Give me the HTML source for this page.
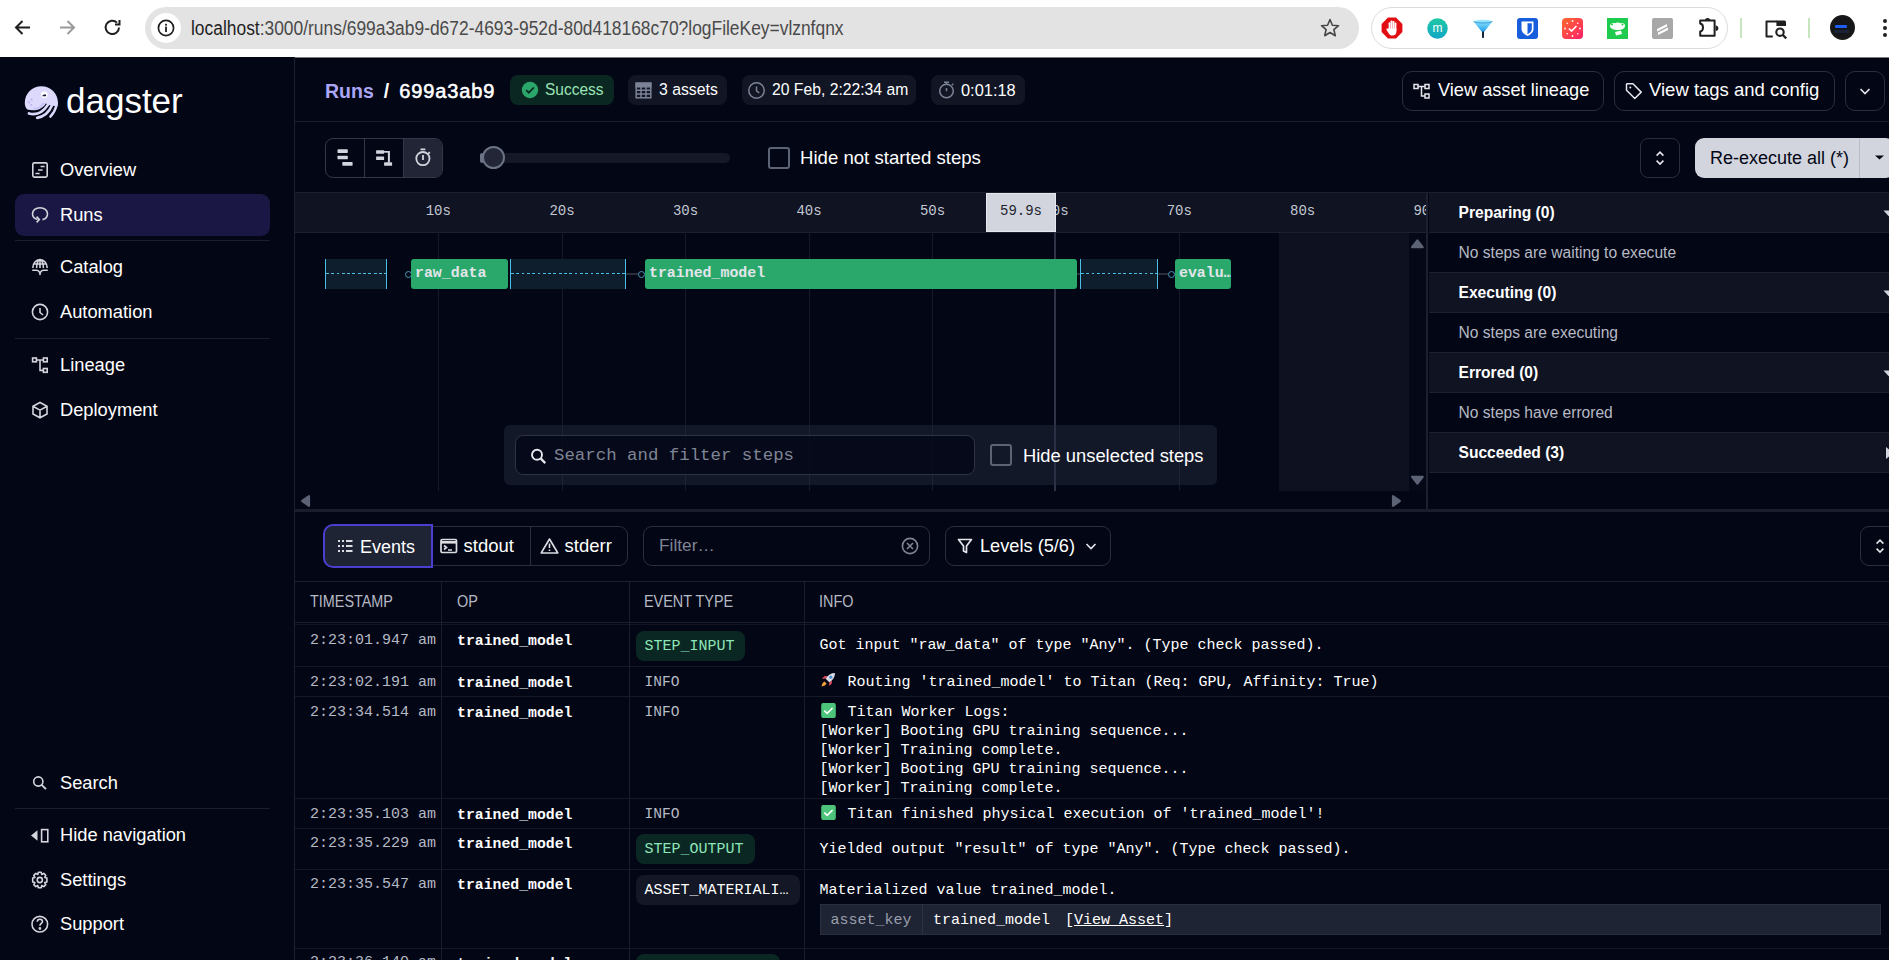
<!DOCTYPE html>
<html><head><meta charset="utf-8">
<style>
*{box-sizing:border-box;margin:0;padding:0}
html,body{width:1889px;height:960px;overflow:hidden;background:#030615;font-family:"Liberation Sans",sans-serif;color:#fff}
.a{position:absolute}
.mono{font-family:"Liberation Mono",monospace}
#chrome{position:absolute;left:0;top:0;width:1889px;height:57px;background:#fff}
#side{position:absolute;left:0;top:57px;width:295px;height:903px;background:#030615;border-right:1px solid #1c1f2e}
.nav{position:absolute;left:15px;width:255px;height:42px;border-radius:10px}
.nav span{position:absolute;left:45px;top:11px;font-size:18px;color:#fff;white-space:nowrap}
.nav svg{position:absolute;left:16px;top:12px}
.sep{position:absolute;left:15px;width:255px;height:1px;background:#1c1f2e}
.tag{position:absolute;top:75px;height:30px;border-radius:8px;background:#131726;font-size:15px;white-space:nowrap}
.btn{position:absolute;border:1px solid #2a2e3d;border-radius:10px;white-space:nowrap}
</style></head><body>
<!-- ============ BROWSER CHROME ============ -->
<div id="chrome">
  <svg class="a" style="left:0;top:0" width="140" height="57" viewBox="0 0 140 57">
    <g fill="none" stroke="#1f1f1f" stroke-width="2">
      <path d="M30 27.5H16M22.5 21L16 27.5L22.5 34"/>
    </g>
    <g fill="none" stroke="#9a9a9a" stroke-width="2">
      <path d="M60 27.5H74M67.5 21L74 27.5L67.5 34"/>
    </g>
    <g fill="none" stroke="#1f1f1f" stroke-width="2">
      <path d="M119 27.5A6.7 6.7 0 1 1 117 22.6"/>
      <path d="M119.5 20V24.5H115"/>
    </g>
  </svg>
  <div class="a" style="left:145px;top:7px;width:1214px;height:42px;border-radius:21px;background:#e3e3e3"></div>
  <div class="a" style="left:151px;top:13px;width:30px;height:30px;border-radius:15px;background:#fff"></div>
  <svg class="a" style="left:156px;top:18px" width="20" height="20" viewBox="0 0 20 20">
    <circle cx="10" cy="10" r="7.6" fill="none" stroke="#1f1f1f" stroke-width="1.7"/>
    <rect x="9.1" y="8.6" width="1.8" height="5.4" fill="#1f1f1f"/>
    <rect x="9.1" y="5.8" width="1.8" height="1.8" fill="#1f1f1f"/>
  </svg>
  <div class="a" style="left:191px;top:17px;font-size:20px;line-height:22px;color:#4a4a4a;white-space:nowrap;letter-spacing:0;transform:scaleX(0.87);transform-origin:0 0"><span style="color:#1f1f1f">localhost</span>:3000/runs/699a3ab9-d672-4693-952d-80d418168c70?logFileKey=vlznfqnx</div>
  <svg class="a" style="left:1319px;top:17px" width="22" height="22" viewBox="0 0 22 22">
    <path d="M11 2.5L13.4 8.2L19.5 8.7L14.9 12.7L16.3 18.7L11 15.5L5.7 18.7L7.1 12.7L2.5 8.7L8.6 8.2Z" fill="none" stroke="#474747" stroke-width="1.6" stroke-linejoin="round"/>
  </svg>
  <div class="a" style="left:1371px;top:7px;width:357px;height:42px;border-radius:21px;border:1px solid #dcdcdc"></div>
  <svg class="a" style="left:1380px;top:16px" width="24" height="24" viewBox="0 0 24 24">
  <path d="M8 1.6H16L22.4 8V16L16 22.4H8L1.6 16V8Z" fill="#e20f12"/>
  <g fill="#fff">
    <rect x="8.6" y="6.2" width="1.9" height="9" rx="0.95"/>
    <rect x="10.6" y="4.4" width="1.9" height="10" rx="0.95"/>
    <rect x="12.6" y="4.9" width="1.9" height="10" rx="0.95"/>
    <rect x="14.6" y="6.6" width="1.8" height="8.5" rx="0.9"/>
    <path d="M8.6 12.5H16.4V15.5C16.4 18 15 19.6 12.5 19.6C10.5 19.6 9.6 18.6 8.6 17.2L6.4 13.6C6 12.8 6.9 12 7.6 12.6Z"/>
  </g>
</svg>
  <svg class="a" style="left:1427px;top:18px" width="21" height="21" viewBox="0 0 21 21">
    <defs><linearGradient id="mg" x1="0" y1="0" x2="0" y2="1"><stop offset="0" stop-color="#1ec9a4"/><stop offset="1" stop-color="#13a6c6"/></linearGradient></defs>
    <circle cx="10.5" cy="10.5" r="10.2" fill="url(#mg)"/>
    <text x="10.5" y="14.3" font-size="12" fill="#fff" text-anchor="middle" font-family="Liberation Sans">m</text>
  </svg>
  <svg class="a" style="left:1472px;top:17px" width="22" height="22" viewBox="0 0 22 22">
  <defs><linearGradient id="fg" x1="0" y1="0" x2="0" y2="1"><stop offset="0" stop-color="#a6ecff"/><stop offset="0.5" stop-color="#3db4f0"/><stop offset="1" stop-color="#0b58b8"/></linearGradient></defs>
  <path d="M1.6 4.5C2.5 2 19.5 2 20.4 4.5L12 15V20.5H10V15Z" fill="url(#fg)"/>
  <path d="M1.6 4.5C4 6.5 18 6.5 20.4 4.5" fill="none" stroke="#2a8fd6" stroke-width="0.8"/>
  <path d="M10 14.6H12V20.8H10Z" fill="#15223a"/>
</svg>
  <svg class="a" style="left:1517px;top:18px" width="21" height="21" viewBox="0 0 21 21">
    <rect x="0" y="0" width="21" height="21" rx="3" fill="#175ddc"/>
    <path d="M4.5 3.5H16.5V11C16.5 14.5 13 16.8 10.5 18C8 16.8 4.5 14.5 4.5 11Z" fill="#fff"/>
    <path d="M10.5 5.2H14.8V11C14.8 13.5 12.5 15.3 10.5 16.2Z" fill="#175ddc"/>
  </svg>
  <svg class="a" style="left:1562px;top:18px" width="21" height="21" viewBox="0 0 21 21">
    <defs><linearGradient id="cg" x1="0" y1="0" x2="1" y2="1"><stop offset="0" stop-color="#ff6a2a"/><stop offset="1" stop-color="#ff1f6a"/></linearGradient></defs>
    <rect x="0" y="0" width="21" height="21" rx="4" fill="url(#cg)"/>
    <path d="M7 10.5L9.5 13L14.5 8" fill="none" stroke="#fff" stroke-width="1.6"/>
    <g fill="#fff"><circle cx="10.5" cy="3" r="0.9"/><circle cx="10.5" cy="18" r="0.9"/><circle cx="3" cy="10.5" r="0.9"/><circle cx="18" cy="10.5" r="0.9"/><circle cx="5.2" cy="5.2" r="0.8"/><circle cx="15.8" cy="5.2" r="0.8"/><circle cx="5.2" cy="15.8" r="0.8"/><circle cx="15.8" cy="15.8" r="0.8"/></g>
  </svg>
  <svg class="a" style="left:1607px;top:18px" width="21" height="21" viewBox="0 0 21 21">
    <rect x="0" y="0" width="21" height="21" fill="#1ecb4f"/>
    <path d="M3 8C3 5.5 5.5 4.5 8 5.2C9.5 4.2 12 4.2 13.5 5.2C16 4.5 18.5 5.5 18 8.5C17.5 11 14 12 10.5 12C7 12 3 10.5 3 8Z" fill="#fff"/>
    <path d="M8 14L14 12.5L15 16L9 17.5Z" fill="#fff"/>
    <circle cx="5" cy="6.5" r="1" fill="#1ecb4f"/><circle cx="15.5" cy="6.5" r="1" fill="#1ecb4f"/>
  </svg>
  <svg class="a" style="left:1652px;top:18px" width="21" height="21" viewBox="0 0 21 21">
    <rect x="0" y="0" width="21" height="21" rx="2" fill="#a8a8a8"/>
    <path d="M5 11L15 6V8.5L5 13.5Z M6 14.5L16 9.5V12L6 17Z" fill="#fff"/>
  </svg>
  <svg class="a" style="left:1694px;top:14px" width="28" height="28" viewBox="1694 14 28 28">
  <path d="M1700.2 20.6H1714.6V35.8H1700.2V31.4C1702.2 31 1703 30 1703 27.4C1703 24.8 1702.2 23.8 1700.2 23.4Z" fill="none" stroke="#1f1f1f" stroke-width="2" stroke-linejoin="round"/>
  <path d="M1704.9 20.6A2.7 2.7 0 0 1 1710.3 20.6Z" fill="#1f1f1f"/>
  <path d="M1715.6 25.6A2.7 2.7 0 0 1 1715.6 31Z" fill="#1f1f1f"/>
</svg>
  <div class="a" style="left:1740px;top:18px;width:2px;height:20px;background:#c6e5bf"></div>
  <svg class="a" style="left:1760px;top:14px" width="30" height="28" viewBox="1760 14 30 28">
  <path d="M1772.8 36.5H1766.5V21.5H1777" fill="none" stroke="#1f1f1f" stroke-width="2" stroke-linejoin="round"/>
  <path d="M1776.4 20.4H1784.5A1.5 1.5 0 0 1 1786 21.9V26H1776.4Z" fill="#1f1f1f"/>
  <circle cx="1780" cy="32.2" r="3.7" fill="none" stroke="#1f1f1f" stroke-width="2.1"/>
  <path d="M1782.8 35L1786.3 38.4" stroke="#1f1f1f" stroke-width="2.2"/>
</svg>
  <div class="a" style="left:1808px;top:18px;width:2px;height:20px;background:#c6e5bf"></div>
  <div class="a" style="left:1830px;top:15px;width:25px;height:25px;border-radius:50%;background:radial-gradient(circle at 50% 45%,#10131c 0,#171717 60%,#2a2a26 100%);overflow:hidden"><div class="a" style="left:4.5px;top:9.5px;width:12px;height:3.5px;background:#1f5ef5;border-radius:1px"></div><div class="a" style="left:4px;top:15px;width:15px;height:3px;background:#1a2235"></div></div>
  <svg class="a" style="left:1880px;top:17px" width="9" height="22" viewBox="0 0 9 22">
    <circle cx="5" cy="4" r="2" fill="#1f1f1f"/><circle cx="5" cy="11" r="2" fill="#1f1f1f"/><circle cx="5" cy="18" r="2" fill="#1f1f1f"/>
  </svg>
</div>
<div class="a" style="left:0;top:57px;width:1889px;height:1px;background:#7a7b80"></div><div class="a" style="left:0;top:58px;width:1889px;height:1px;background:#01020c"></div>

<!-- ============ SIDEBAR ============ -->
<div id="side">
</div>
<svg class="a" style="left:20px;top:82px" width="42" height="42" viewBox="0 0 42 42">
  <path d="M7.2 27.6C5.5 25.5 4.8 23.5 4.8 20.8C4.8 11.6 12.2 4.2 21.4 4.2C30.6 4.2 38 11.6 38 20.8C38 21.8 37.9 22.6 37.7 23.4L34.6 24L29.8 23.2L25.7 21.5C23 26.5 17 29.8 7.2 27.6Z" fill="#dcd9fc"/>
  <g fill="none" stroke="#dcd9fc" stroke-linecap="round">
    <path d="M8.9 31.4Q20 34.8 27.9 22.8" stroke-width="2.6"/>
    <path d="M17.2 35.8Q27.5 34 31.9 23.5" stroke-width="2.7"/>
    <path d="M30.4 34.6Q34.8 30 36.5 23.5" stroke-width="2.5"/>
  </g>
  <path d="M13 26.8Q20 27.5 24 20.5" fill="none" stroke="#c9c4f8" stroke-width="2"/>
  <circle cx="24.3" cy="12.7" r="3.3" fill="#fff"/>
  <path d="M22.4 14.2C22.5 13 23.3 12.6 24 12.8C24.5 11.9 25.8 12 26.1 13.1C26.2 13.6 26.1 14 25.9 14.2Z" fill="#1b1446"/>
  <g fill="#bcb6f2"><circle cx="11.6" cy="17.7" r="1.1"/><circle cx="9" cy="20.3" r="1.1"/><circle cx="11.4" cy="23" r="1.1"/></g>
</svg>
<div class="a" style="left:66px;top:80.5px;font-size:35px;line-height:40px;color:#fff;white-space:nowrap">dagster</div>
<div class="a" style="left:15px;top:194px;width:255px;height:42px;border-radius:9px;background:#1b1744"></div>
<div class="sep" style="top:240px"></div>
<div class="sep" style="top:338px"></div>
<div class="sep" style="top:808px"></div>
<div class="a" style="left:60px;top:160px;font-size:18.3px;line-height:20px;color:#fff">Overview</div>
<div class="a" style="left:60px;top:205px;font-size:18.3px;line-height:20px;color:#fff">Runs</div>
<div class="a" style="left:60px;top:257px;font-size:18.3px;line-height:20px;color:#fff">Catalog</div>
<div class="a" style="left:60px;top:302px;font-size:18.3px;line-height:20px;color:#fff">Automation</div>
<div class="a" style="left:60px;top:355px;font-size:18.3px;line-height:20px;color:#fff">Lineage</div>
<div class="a" style="left:60px;top:400px;font-size:18.3px;line-height:20px;color:#fff">Deployment</div>
<div class="a" style="left:60px;top:773px;font-size:18.3px;line-height:20px;color:#fff">Search</div>
<div class="a" style="left:60px;top:825px;font-size:18.3px;line-height:20px;color:#fff;white-space:nowrap">Hide navigation</div>
<div class="a" style="left:60px;top:870px;font-size:18.3px;line-height:20px;color:#fff">Settings</div>
<div class="a" style="left:60px;top:914px;font-size:18.3px;line-height:20px;color:#fff">Support</div>
<svg class="a" style="left:0;top:140px" width="60" height="300" viewBox="0 140 60 300" fill="none" stroke="#d4d4dc" stroke-width="1.6">
  <!-- overview -->
  <rect x="32.8" y="162.9" width="14.4" height="14.2" rx="1.6"/>
  <path d="M40.6 166.5H44.6M38 170H42.6M35.5 173.5H39.6" />
  <!-- runs -->
  <path d="M37.5 219.6C34.5 218.8 32.5 216.6 32.5 213.8C32.5 210.3 35.8 207.8 40 207.8C44.2 207.8 47.5 210.3 47.5 213.8C47.5 216.8 45.5 219 42.5 219.6"/>
  <path d="M36.6 216.6L39.3 219.6L36.6 222.4"/>
  <!-- catalog -->
  <path d="M32.8 268C32.8 263 36 259.6 40 259.6C44 259.6 47.2 263 47.2 268M36.6 268C36.6 263 38.2 259.6 40 259.6C41.8 259.6 43.4 263 43.4 268M40 259.6V268M33.4 264H46.6"/>
  <path d="M32.2 270.3H36.5C38 270.3 39.3 271.3 40 273.3C40.7 271.3 42 270.3 43.5 270.3H47.8M40 273.3V275"/>
  <!-- automation -->
  <circle cx="40" cy="312" r="7.6"/>
  <path d="M40 308V312.5L43 315"/>
  <!-- lineage -->
  <rect x="32.6" y="358" width="3.8" height="3.8"/>
  <rect x="43.4" y="358" width="3.8" height="3.8"/>
  <rect x="43.4" y="368.5" width="3.8" height="3.8"/>
  <path d="M36.4 360H43.4 M40 360V370.4H43.4"/>
  <!-- deployment -->
  <path d="M40 402.5L47 406.3V414L40 417.8L33 414V406.3Z M33 406.3L40 410.1L47 406.3 M40 410.1V417.8"/>
</svg>
<svg class="a" style="left:0;top:760px" width="60" height="190" viewBox="0 760 60 190" fill="none" stroke="#d4d4dc" stroke-width="1.6">
  <circle cx="38.3" cy="781.5" r="4.6"/>
  <path d="M41.6 784.8L46 789.2" stroke-width="1.9"/>
  <path d="M31 835.5L37.5 830.2V840.8Z" fill="#d4d4dc" stroke="none"/>
  <rect x="41.6" y="829.6" width="6.2" height="12.2"/>
  <circle cx="39.8" cy="880" r="2.6"/>
  <path d="M38.4 872.3H41.2L41.8 874.5L43.8 873.4L45.8 875.4L44.7 877.4L46.9 878V882L44.7 882.6L45.8 884.6L43.8 886.6L41.8 885.5L41.2 887.7H38.4L37.8 885.5L35.8 886.6L33.8 884.6L34.9 882.6L32.7 882V878L34.9 877.4L33.8 875.4L35.8 873.4L37.8 874.5Z" stroke-linejoin="round"/>
  <circle cx="39.8" cy="924.2" r="7.8"/>
  <path d="M37.3 921.8C37.3 920.2 38.4 919.2 39.9 919.2C41.4 919.2 42.5 920.2 42.5 921.6C42.5 923.4 39.9 923.6 39.9 925.8"/>
  <circle cx="39.9" cy="928.5" r="0.6" fill="#d4d4dc"/>
</svg>

<!-- ============ HEADER ============ -->
<div class="a" style="left:295px;top:121px;width:1594px;height:1px;background:#1c1f2e"></div>
<div class="a" style="left:325px;top:80px;font-size:19.5px;line-height:22px;font-weight:bold;white-space:nowrap"><span style="color:#aca6f6">Runs</span><span style="color:#fff;margin-left:10px">/</span><span style="color:#fff;margin-left:10px;letter-spacing:0.9px;font-weight:normal;font-size:20px;-webkit-text-stroke:0.55px #fff">699a3ab9</span></div>
<div class="a" style="left:510px;top:75px;width:104px;height:30px;border-radius:8px;background:#0a2722"></div>
<svg class="a" style="left:521px;top:81px" width="18" height="18" viewBox="0 0 18 18"><circle cx="9" cy="9" r="8.2" fill="#2aa66b"/><path d="M5.2 9.2L7.8 11.7L12.8 6.5" fill="none" stroke="#0a2722" stroke-width="1.8"/></svg>
<div class="a" style="left:545px;top:80px;font-size:16.3px;line-height:18px;color:#9be4b4;white-space:nowrap;transform:scaleX(0.95);transform-origin:0 0">Success</div>
<div class="a" style="left:628px;top:75px;width:99px;height:30px;border-radius:8px;background:#121624"></div>
<svg class="a" style="left:634px;top:81px" width="19" height="19" viewBox="0 0 19 19" fill="none" stroke="#7c8396" stroke-width="1.5"><rect x="2.2" y="2.2" width="14.6" height="14.6"/><rect x="2.2" y="2.2" width="14.6" height="3.6" fill="#7c8396"/><path d="M2.2 9.3H16.8M2.2 13H16.8M7 5.8V16.8M12 5.8V16.8"/></svg>
<div class="a" style="left:659px;top:80px;font-size:16.3px;line-height:18px;color:#fff;white-space:nowrap;transform:scaleX(0.97);transform-origin:0 0">3 assets</div>
<div class="a" style="left:742px;top:75px;width:174px;height:30px;border-radius:8px;background:#121624"></div>
<svg class="a" style="left:747px;top:81px" width="19" height="19" viewBox="0 0 19 19" fill="none" stroke="#7c8396" stroke-width="1.5"><circle cx="9.5" cy="9.5" r="7.7"/><path d="M9.5 5.5V9.8L12.3 12"/></svg>
<div class="a" style="left:772px;top:80px;font-size:16.3px;line-height:18px;color:#fff;white-space:nowrap;transform:scaleX(0.965);transform-origin:0 0">20 Feb, 2:22:34 am</div>
<div class="a" style="left:931px;top:75px;width:94px;height:30px;border-radius:8px;background:#121624"></div>
<svg class="a" style="left:937px;top:80px" width="19" height="20" viewBox="0 0 19 20" fill="none" stroke="#7c8396" stroke-width="1.5"><circle cx="9.5" cy="11" r="6.8"/><path d="M7 2.2H12M9.5 2.2V4.2M9.5 8V11.3M15 5L16.3 3.7"/></svg>
<div class="a" style="left:961px;top:81px;font-size:16.4px;line-height:18px;color:#fff;white-space:nowrap">0:01:18</div>

<div class="btn" style="left:1402px;top:71px;width:202px;height:40px"></div>
<svg class="a" style="left:1413px;top:82px" width="18" height="18" viewBox="0 0 18 18" fill="none" stroke="#e6e6ec" stroke-width="1.5"><rect x="1" y="2.5" width="4" height="4"/><rect x="12" y="2.5" width="4" height="4"/><rect x="12" y="12" width="4" height="4"/><path d="M5 4.5H12M8.5 4.5V14H12"/></svg>
<div class="a" style="left:1438px;top:80.3px;font-size:18.2px;line-height:20px;color:#fff;white-space:nowrap">View asset lineage</div>
<div class="btn" style="left:1614px;top:71px;width:221px;height:40px"></div>
<svg class="a" style="left:1624px;top:81px" width="20" height="20" viewBox="0 0 20 20" fill="none" stroke="#e6e6ec" stroke-width="1.5" stroke-linejoin="round"><path d="M2.5 3.2V9.2L10.8 17.5L17.2 11.1L8.9 2.8H2.9Z"/><circle cx="6.3" cy="6.6" r="1" fill="#e6e6ec" stroke="none"/></svg>
<div class="a" style="left:1649px;top:80.1px;font-size:18.5px;line-height:20px;color:#fff;white-space:nowrap">View tags and config</div>
<div class="btn" style="left:1845px;top:71px;width:40px;height:40px"></div>
<svg class="a" style="left:1857px;top:84px" width="16" height="14" viewBox="0 0 16 14" fill="none" stroke="#e6e6ec" stroke-width="1.6"><path d="M3.5 5L8 9.5L12.5 5"/></svg>

<!-- ============ TOOLBAR ============ -->
<div class="a" style="left:295px;top:192px;width:1594px;height:1px;background:#1c1f2e"></div>
<div class="btn" style="left:325px;top:138px;width:118px;height:40px;border-radius:8px;overflow:hidden;border-color:#333849">
  <div class="a" style="left:77px;top:0;width:40px;height:38px;background:#212536"></div>
  <div class="a" style="left:38px;top:0;width:1px;height:38px;background:#333849"></div>
  <div class="a" style="left:77px;top:0;width:1px;height:38px;background:#333849"></div>
</div>
<svg class="a" style="left:330px;top:140px" width="110" height="36" viewBox="330 140 110 36" fill="#d2d5dd">
  <rect x="337.5" y="149.3" width="10.3" height="3.6" rx="0.6"/><rect x="337.5" y="155.7" width="10.3" height="3.6" rx="0.6"/><rect x="342.3" y="162.1" width="10.3" height="3.6" rx="0.6"/>
  <rect x="376.1" y="150.2" width="8" height="3.6" rx="0.6"/><rect x="376.1" y="156.4" width="8" height="3.6" rx="0.6"/><rect x="384.1" y="162.2" width="8" height="3.6" rx="0.6"/>
  <rect x="387.9" y="151" width="2" height="11.5"/><rect x="384" y="151" width="5" height="1.7"/>
  <g fill="none" stroke="#d2d5dd" stroke-width="1.8"><circle cx="422.9" cy="158.6" r="6.6"/><path d="M420.5 149.3H425.3M423 155V160M428.2 153.8L429.8 152.2"/></g>
</svg>
<div class="a" style="left:480px;top:153px;width:250px;height:9.5px;border-radius:5px;background:#151927"></div>
<div class="a" style="left:480px;top:153px;width:4px;height:9.5px;border-radius:2px;background:#6b7385"></div><div class="a" style="left:482px;top:146px;width:23px;height:23px;border-radius:50%;background:#222637;border:2.3px solid #6b7385"></div>
<div class="a" style="left:768px;top:146.5px;width:22px;height:22px;border-radius:3px;border:2.3px solid #5c6375"></div>
<div class="a" style="left:800px;top:148px;font-size:18.6px;line-height:20px;color:#fff;white-space:nowrap">Hide not started steps</div>
<div class="btn" style="left:1640px;top:138px;width:40px;height:40px;border-radius:8px"></div>
<svg class="a" style="left:1651px;top:147px" width="18" height="22" viewBox="0 0 18 22" fill="none" stroke="#e6e6ec" stroke-width="1.6"><path d="M5.6 8.6L9 5.2L12.4 8.6M5.6 13.6L9 17L12.4 13.6"/></svg>
<div class="a" style="left:1695px;top:138px;width:200px;height:40px;border-radius:9px;background:#d2d5dd"></div>
<div class="a" style="left:1859px;top:138px;width:1px;height:40px;background:#b8bcc6"></div>
<div class="a" style="left:1710px;top:147.5px;font-size:18px;line-height:20px;color:#030615;white-space:nowrap">Re-execute all (*)</div>
<svg class="a" style="left:1873px;top:152px" width="14" height="10" viewBox="0 0 14 10"><path d="M2 3.5H11L6.5 7.5Z" fill="#030615"/></svg>

<!-- ============ GANTT ============ -->
<div class="a" style="left:295px;top:193px;width:1132px;height:39px;background:#0f1322;overflow:hidden"><div class="a mono" style="left:103.3px;width:80px;text-align:center;top:10px;font-size:14px;line-height:16px;color:#c4c8d2">10s</div><div class="a mono" style="left:227.0px;width:80px;text-align:center;top:10px;font-size:14px;line-height:16px;color:#c4c8d2">20s</div><div class="a mono" style="left:350.5px;width:80px;text-align:center;top:10px;font-size:14px;line-height:16px;color:#c4c8d2">30s</div><div class="a mono" style="left:474.0px;width:80px;text-align:center;top:10px;font-size:14px;line-height:16px;color:#c4c8d2">40s</div><div class="a mono" style="left:597.5px;width:80px;text-align:center;top:10px;font-size:14px;line-height:16px;color:#c4c8d2">50s</div><div class="a mono" style="left:721.0px;width:80px;text-align:center;top:10px;font-size:14px;line-height:16px;color:#c4c8d2">60s</div><div class="a mono" style="left:844.3px;width:80px;text-align:center;top:10px;font-size:14px;line-height:16px;color:#c4c8d2">70s</div><div class="a mono" style="left:967.6px;width:80px;text-align:center;top:10px;font-size:14px;line-height:16px;color:#c4c8d2">80s</div><div class="a mono" style="left:1091.0px;width:80px;text-align:center;top:10px;font-size:14px;line-height:16px;color:#c4c8d2">90s</div></div>
<div class="a" style="left:295px;top:232px;width:1132px;height:1px;background:#1c2030"></div>
<div class="a" style="left:438px;top:232px;width:1px;height:259px;background:#161a28"></div><div class="a" style="left:562px;top:232px;width:1px;height:259px;background:#161a28"></div><div class="a" style="left:685px;top:232px;width:1px;height:259px;background:#161a28"></div><div class="a" style="left:809px;top:232px;width:1px;height:259px;background:#161a28"></div><div class="a" style="left:932px;top:232px;width:1px;height:259px;background:#161a28"></div><div class="a" style="left:1179px;top:232px;width:1px;height:259px;background:#161a28"></div><div class="a" style="left:1303px;top:232px;width:1px;height:259px;background:#161a28"></div>
<div class="a" style="left:1279px;top:233px;width:130px;height:258px;background:#0d1120"></div>
<div class="a" style="left:1409px;top:233px;width:18px;height:258px;background:#050817"></div>
<svg class="a" style="left:1410px;top:238px" width="15" height="12" viewBox="0 0 15 12"><path d="M7.4 2.4L12.7 9.2H2.1Z" fill="#5c6375" stroke="#5c6375" stroke-linejoin="round" stroke-width="2.2"/></svg>
<svg class="a" style="left:1410px;top:474px" width="15" height="12" viewBox="0 0 15 12"><path d="M7.4 9.6L12.7 2.8H2.1Z" fill="#5c6375" stroke="#5c6375" stroke-linejoin="round" stroke-width="2.2"/></svg>
<svg class="a" style="left:299px;top:493px" width="13" height="16" viewBox="0 0 13 16"><path d="M3.2 8L10 3.2V12.8Z" fill="#5c6375" stroke="#5c6375" stroke-linejoin="round" stroke-width="2.2"/></svg>
<svg class="a" style="left:1390px;top:493px" width="13" height="16" viewBox="0 0 13 16"><path d="M9.8 8L3 3.2V12.8Z" fill="#5c6375" stroke="#5c6375" stroke-linejoin="round" stroke-width="2.2"/></svg>
<div class="a" style="left:1054px;top:232px;width:2px;height:259px;background:#2e3345"></div>
<div class="a" style="left:986px;top:193px;width:70px;height:39px;background:#d2d5dd;border:1px solid #e6e8ee"></div>
<div class="a mono" style="left:986px;width:70px;text-align:center;top:203px;font-size:14px;line-height:16px;color:#1b1f2e">59.9s</div>
<div class="a" style="left:325px;top:259px;width:62px;height:30px;background:#0e1e2c;border-left:1.3px solid #4cbde4;border-right:1.3px solid #4cbde4"><div class="a" style="left:0;right:0;top:14px;height:1.2px;background:repeating-linear-gradient(90deg,#4cbde4 0 2.8px,transparent 2.8px 5.3px)"></div></div><div class="a" style="left:405.29999999999995px;top:270.8px;width:7.2px;height:7.2px;border-radius:50%;border:1.1px solid #4b97b8"></div><div class="a" style="left:411px;top:259px;width:97px;height:30px;border-radius:3px;background:#2aa86b;overflow:hidden"><div class="a mono" style="left:4px;top:6px;font-size:14.9px;line-height:17px;font-weight:bold;color:#e2e5ea;white-space:nowrap">raw_data</div></div>
<div class="a" style="left:510px;top:259px;width:116px;height:30px;background:#0e1e2c;border-left:1.3px solid #4cbde4;border-right:1.3px solid #4cbde4"><div class="a" style="left:0;right:0;top:14px;height:1.2px;background:repeating-linear-gradient(90deg,#4cbde4 0 2.8px,transparent 2.8px 5.3px)"></div></div><div class="a" style="left:626px;top:273px;width:12px;height:2px;background:#2a2e3b"></div><div class="a" style="left:637.6999999999999px;top:270.8px;width:7.2px;height:7.2px;border-radius:50%;border:1.1px solid #4b97b8"></div><div class="a" style="left:645px;top:259px;width:432px;height:30px;border-radius:3px;background:#2aa86b;overflow:hidden"><div class="a mono" style="left:4px;top:6px;font-size:14.9px;line-height:17px;font-weight:bold;color:#e2e5ea;white-space:nowrap">trained_model</div></div>
<div class="a" style="left:1077px;top:273px;width:3px;height:2px;background:#2a2e3b"></div><div class="a" style="left:1080px;top:259px;width:78px;height:30px;background:#0e1e2c;border-left:1.3px solid #4cbde4;border-right:1.3px solid #4cbde4"><div class="a" style="left:0;right:0;top:14px;height:1.2px;background:repeating-linear-gradient(90deg,#4cbde4 0 2.8px,transparent 2.8px 5.3px)"></div></div><div class="a" style="left:1158px;top:273px;width:10px;height:2px;background:#2a2e3b"></div><div class="a" style="left:1167.7px;top:270.8px;width:7.2px;height:7.2px;border-radius:50%;border:1.1px solid #4b97b8"></div><div class="a" style="left:1175px;top:259px;width:56px;height:30px;border-radius:3px;background:#2aa86b;overflow:hidden"><div class="a mono" style="left:4px;top:6px;font-size:14.9px;line-height:17px;font-weight:bold;color:#e2e5ea;white-space:nowrap">evalu…</div></div>
<div class="a" style="left:1426px;top:193px;width:2px;height:317px;background:#1c2030"></div>
<div class="a" style="left:295px;top:509px;width:1594px;height:3px;background:#1a1e2c"></div>

<!-- search float -->
<div class="a" style="left:504px;top:425px;width:713px;height:60px;border-radius:6px;background:rgba(40,46,66,0.45)"></div>
<div class="a" style="left:515px;top:435px;width:460px;height:40px;border-radius:8px;background:rgba(3,6,21,0.8);border:1px solid #2e3344"></div>
<svg class="a" style="left:529px;top:447px" width="19" height="19" viewBox="0 0 19 19" fill="none" stroke="#e6e6ec" stroke-width="1.9"><circle cx="8" cy="7.8" r="5"/><path d="M11.6 11.4L16.3 16.1" stroke-width="2.2"/></svg>
<div class="a mono" style="left:554px;top:446.3px;font-size:17.4px;line-height:20px;color:#7f8595;white-space:nowrap">Search and filter steps</div>
<div class="a" style="left:990px;top:444px;width:22px;height:22px;border-radius:3px;border:2.3px solid #5c6375"></div>
<div class="a" style="left:1023px;top:445.6px;font-size:18.35px;line-height:20px;color:#fff;white-space:nowrap">Hide unselected steps</div>

<!-- step panel -->
<div class="a" style="left:1428px;top:193px;width:461px;height:316px;background:#030615"></div>
<div class="a" style="left:1429px;top:193px;width:460px;height:40px;background:#0f1322;border-bottom:1px solid #1c2030"><div class="a" style="left:29.5px;top:11px;font-size:15.6px;line-height:18px;font-weight:bold;color:#fff;white-space:nowrap">Preparing (0)</div></div><div class="a" style="left:1429px;top:233px;width:460px;height:40px;background:#030615;border-bottom:1px solid #1c2030"><div class="a" style="left:29.5px;top:10.5px;font-size:15.6px;line-height:18px;color:#b6bac4;white-space:nowrap">No steps are waiting to execute</div></div><div class="a" style="left:1429px;top:273px;width:460px;height:40px;background:#0f1322;border-bottom:1px solid #1c2030"><div class="a" style="left:29.5px;top:11px;font-size:15.6px;line-height:18px;font-weight:bold;color:#fff;white-space:nowrap">Executing (0)</div></div><div class="a" style="left:1429px;top:313px;width:460px;height:40px;background:#030615;border-bottom:1px solid #1c2030"><div class="a" style="left:29.5px;top:10.5px;font-size:15.6px;line-height:18px;color:#b6bac4;white-space:nowrap">No steps are executing</div></div><div class="a" style="left:1429px;top:353px;width:460px;height:40px;background:#0f1322;border-bottom:1px solid #1c2030"><div class="a" style="left:29.5px;top:11px;font-size:15.6px;line-height:18px;font-weight:bold;color:#fff;white-space:nowrap">Errored (0)</div></div><div class="a" style="left:1429px;top:393px;width:460px;height:40px;background:#030615;border-bottom:1px solid #1c2030"><div class="a" style="left:29.5px;top:10.5px;font-size:15.6px;line-height:18px;color:#b6bac4;white-space:nowrap">No steps have errored</div></div><div class="a" style="left:1429px;top:433px;width:460px;height:40px;background:#0f1322;border-bottom:1px solid #1c2030"><div class="a" style="left:29.5px;top:11px;font-size:15.6px;line-height:18px;font-weight:bold;color:#fff;white-space:nowrap">Succeeded (3)</div></div>
<!-- ============ LOGS TOOLBAR ============ -->
<div class="a" style="left:430px;top:526px;width:198px;height:40px;border:1px solid #2a2e3d;border-left:none;border-radius:0 9px 9px 0"></div>
<div class="a" style="left:530px;top:526px;width:1px;height:40px;background:#2a2e3d"></div>
<div class="a" style="left:322.5px;top:523.5px;width:110px;height:44.5px;border:2.5px solid #4b3fd0;border-radius:10px 0 0 10px;background:#1f2434"></div>
<svg class="a" style="left:336px;top:538px" width="18" height="16" viewBox="0 0 18 16" fill="#dcdde3"><rect x="2" y="2" width="2" height="2"/><rect x="2" y="7" width="2" height="2"/><rect x="2" y="12" width="2" height="2"/><rect x="6" y="2" width="2" height="2"/><rect x="6" y="7" width="2" height="2"/><rect x="6" y="12" width="2" height="2"/><rect x="10" y="2" width="6.5" height="2"/><rect x="10" y="7" width="6.5" height="2"/><rect x="10" y="12" width="6.5" height="2"/></svg>
<div class="a" style="left:360px;top:536.7px;font-size:18px;line-height:20px;color:#fff">Events</div>
<svg class="a" style="left:439px;top:537px" width="20" height="18" viewBox="0 0 20 18" fill="none" stroke="#dcdde3" stroke-width="1.7"><rect x="2" y="2.5" width="15.5" height="13" rx="1.3"/><path d="M2 5.3H17.5" stroke-width="2.6"/><path d="M5 8.5L7.5 10.5L5 12.5M9 13H13"/></svg>
<div class="a" style="left:463.5px;top:536.2px;font-size:18.5px;line-height:20px;color:#fff">stdout</div>
<svg class="a" style="left:540px;top:537px" width="20" height="18" viewBox="0 0 20 18" fill="none" stroke="#dcdde3" stroke-width="1.6" stroke-linejoin="round"><path d="M9.5 2L17.8 16H1.2Z"/><path d="M9.5 6.5V11M9.5 12.5V14"/></svg>
<div class="a" style="left:564.5px;top:536.2px;font-size:18.5px;line-height:20px;color:#fff">stderr</div>

<div class="a" style="left:643px;top:526px;width:287px;height:40px;border:1px solid #2a2e3d;border-radius:9px"></div>
<div class="a" style="left:659px;top:535.3px;font-size:17.3px;line-height:20px;color:#7f8595">Filter…</div>
<svg class="a" style="left:900px;top:536px" width="20" height="20" viewBox="0 0 20 20" fill="none" stroke="#7f8595" stroke-width="1.6"><circle cx="10" cy="10" r="7.6"/><path d="M7 7L13 13M13 7L7 13"/></svg>
<div class="a" style="left:945px;top:526px;width:166px;height:40px;border:1px solid #2a2e3d;border-radius:9px"></div>
<svg class="a" style="left:956px;top:537px" width="18" height="18" viewBox="0 0 18 18" fill="none" stroke="#e6e6ec" stroke-width="1.7" stroke-linejoin="round"><path d="M2.5 2.5H15.5L10.5 9V15.5L7.5 14V9Z"/></svg>
<div class="a" style="left:980px;top:536px;font-size:18.2px;line-height:20px;color:#fff;white-space:nowrap">Levels (5/6)</div>
<svg class="a" style="left:1083px;top:539px" width="16" height="14" viewBox="0 0 16 14" fill="none" stroke="#e6e6ec" stroke-width="1.6"><path d="M3.5 5L8 9.5L12.5 5"/></svg>
<div class="a" style="left:1860px;top:526px;width:40px;height:40px;border:1px solid #2a2e3d;border-radius:9px"></div>
<svg class="a" style="left:1871px;top:535px" width="18" height="22" viewBox="0 0 18 22" fill="none" stroke="#e6e6ec" stroke-width="1.6"><path d="M5.6 8.6L9 5.2L12.4 8.6M5.6 13.6L9 17L12.4 13.6"/></svg>

<!-- ============ TABLE ============ -->
<div class="a" style="left:295px;top:581px;width:1594px;height:1px;background:#1c2030"></div>
<div class="a" style="left:295px;top:622px;width:1594px;height:1px;background:#1a1e2c"></div><div class="a" style="left:295px;top:624px;width:1594px;height:1px;background:#121624"></div>
<div class="a" style="left:310px;top:593.2px;font-size:16px;line-height:17px;color:#b6bac4;white-space:nowrap;transform:scaleX(0.9);transform-origin:0 0">TIMESTAMP</div>
<div class="a" style="left:456.5px;top:593.2px;font-size:16px;line-height:17px;color:#b6bac4;white-space:nowrap;transform:scaleX(0.9);transform-origin:0 0">OP</div>
<div class="a" style="left:644px;top:593.2px;font-size:16px;line-height:17px;color:#b6bac4;white-space:nowrap;transform:scaleX(0.9);transform-origin:0 0">EVENT TYPE</div>
<div class="a" style="left:819px;top:593.2px;font-size:16px;line-height:17px;color:#b6bac4;white-space:nowrap;transform:scaleX(0.9);transform-origin:0 0">INFO</div>
<div class="a" style="left:441px;top:582px;width:1px;height:378px;background:#1a1e2c"></div>
<div class="a" style="left:629px;top:582px;width:1px;height:378px;background:#1a1e2c"></div>
<div class="a" style="left:804px;top:582px;width:1px;height:378px;background:#1a1e2c"></div>
<div class="a" style="left:295px;top:666px;width:1594px;height:1px;background:#161a28"></div><div class="a" style="left:295px;top:696px;width:1594px;height:1px;background:#161a28"></div><div class="a" style="left:295px;top:798px;width:1594px;height:1px;background:#161a28"></div><div class="a" style="left:295px;top:828px;width:1594px;height:1px;background:#161a28"></div><div class="a" style="left:295px;top:869px;width:1594px;height:1px;background:#161a28"></div><div class="a" style="left:295px;top:948px;width:1594px;height:1px;background:#161a28"></div><div class="a mono" style="left:310px;top:632.4px;font-size:15px;line-height:17px;color:#b6bac4;white-space:nowrap">2:23:01.947 am</div><div class="a mono" style="left:457px;top:633.3px;font-size:14.8px;line-height:17px;font-weight:bold;color:#fff;white-space:nowrap">trained_model</div><div class="a" style="left:635.5px;top:630.5px;width:109px;height:30px;border-radius:8px;background:#0b2724"></div><div class="a mono" style="left:644.5px;top:637.7px;font-size:15px;line-height:17px;color:#8ee6b8;white-space:nowrap">STEP_INPUT</div><div class="a mono" style="left:819.5px;top:637.4px;font-size:15px;line-height:17px;color:#fff;white-space:pre">Got input "raw_data" of type "Any". (Type check passed).</div><div class="a mono" style="left:310px;top:673.7px;font-size:15px;line-height:17px;color:#b6bac4;white-space:nowrap">2:23:02.191 am</div><div class="a mono" style="left:457px;top:674.7px;font-size:14.8px;line-height:17px;font-weight:bold;color:#fff;white-space:nowrap">trained_model</div><div class="a mono" style="left:644.5px;top:674.3px;font-size:14.6px;line-height:17px;color:#b6bac4;white-space:nowrap">INFO</div><div class="a mono" style="left:819.5px;top:673.5px;font-size:15px;line-height:17px;color:#fff;white-space:pre"><span style="display:inline-block;width:16px;height:12px;vertical-align:-2px;position:relative;margin-right:3px"><svg style="position:absolute;left:0;top:-4px" width="16" height="16" viewBox="0 0 16 16"><path d="M15 1C11 1 8 3 5.5 6.5L9.5 10.5C13 8 15 5 15 1Z" fill="#d9dde6"/><circle cx="10.8" cy="5.2" r="1.6" fill="#4f8fd6"/><path d="M5.5 6.5L2 7L4 4.5C5 4 6.5 4 7.5 4.3Z M9.5 10.5L9 14L11.5 12C12 11 12 9.5 11.7 8.5Z" fill="#e2475f"/><path d="M4.5 9.5C3 10 2 12 1.5 14.5C4 14 6 13 6.5 11.5Z" fill="#f6a23b"/></svg></span> Routing 'trained_model' to Titan (Req: GPU, Affinity: True)</div><div class="a mono" style="left:310px;top:703.7px;font-size:15px;line-height:17px;color:#b6bac4;white-space:nowrap">2:23:34.514 am</div><div class="a mono" style="left:457px;top:704.7px;font-size:14.8px;line-height:17px;font-weight:bold;color:#fff;white-space:nowrap">trained_model</div><div class="a mono" style="left:644.5px;top:704.3px;font-size:14.6px;line-height:17px;color:#b6bac4;white-space:nowrap">INFO</div><div class="a mono" style="left:819.5px;top:702.6px;font-size:15px;line-height:19.1px;color:#fff;white-space:pre"><span style="display:inline-block;width:16px;height:12px;vertical-align:-2px;position:relative;margin-right:3px"><svg style="position:absolute;left:0;top:-2.8px" width="16" height="16" viewBox="0 0 16 16"><rect x="1.2" y="0" width="14.6" height="15" rx="2" fill="#4cc47a"/><path d="M4.3 7.6L7.2 10.3L12.6 5" fill="none" stroke="#fff" stroke-width="1.7"/></svg></span> Titan Worker Logs:
[Worker] Booting GPU training sequence...
[Worker] Training complete.
[Worker] Booting GPU training sequence...
[Worker] Training complete.</div><div class="a mono" style="left:310px;top:805.7px;font-size:15px;line-height:17px;color:#b6bac4;white-space:nowrap">2:23:35.103 am</div><div class="a mono" style="left:457px;top:806.7px;font-size:14.8px;line-height:17px;font-weight:bold;color:#fff;white-space:nowrap">trained_model</div><div class="a mono" style="left:644.5px;top:806.3px;font-size:14.6px;line-height:17px;color:#b6bac4;white-space:nowrap">INFO</div><div class="a mono" style="left:819.5px;top:805.6px;font-size:15px;line-height:17px;color:#fff;white-space:pre"><span style="display:inline-block;width:16px;height:12px;vertical-align:-2px;position:relative;margin-right:3px"><svg style="position:absolute;left:0;top:-2.8px" width="16" height="16" viewBox="0 0 16 16"><rect x="1.2" y="0" width="14.6" height="15" rx="2" fill="#4cc47a"/><path d="M4.3 7.6L7.2 10.3L12.6 5" fill="none" stroke="#fff" stroke-width="1.7"/></svg></span> Titan finished physical execution of 'trained_model'!</div><div class="a mono" style="left:310px;top:835.3px;font-size:15px;line-height:17px;color:#b6bac4;white-space:nowrap">2:23:35.229 am</div><div class="a mono" style="left:457px;top:836.3px;font-size:14.8px;line-height:17px;font-weight:bold;color:#fff;white-space:nowrap">trained_model</div><div class="a" style="left:635.5px;top:834px;width:119px;height:30px;border-radius:8px;background:#0b2724"></div><div class="a mono" style="left:644.5px;top:841.2px;font-size:15px;line-height:17px;color:#8ee6b8;white-space:nowrap">STEP_OUTPUT</div><div class="a mono" style="left:819.5px;top:840.7px;font-size:15px;line-height:17px;color:#fff;white-space:pre">Yielded output "result" of type "Any". (Type check passed).</div><div class="a mono" style="left:310px;top:876.3px;font-size:15px;line-height:17px;color:#b6bac4;white-space:nowrap">2:23:35.547 am</div><div class="a mono" style="left:457px;top:877.3px;font-size:14.8px;line-height:17px;font-weight:bold;color:#fff;white-space:nowrap">trained_model</div><div class="a" style="left:635.5px;top:875px;width:164px;height:30px;border-radius:8px;background:#131726"></div><div class="a mono" style="left:644.5px;top:882.2px;font-size:15px;line-height:17px;color:#fff;white-space:nowrap">ASSET_MATERIALI…</div><div class="a mono" style="left:819.5px;top:881.8px;font-size:15px;line-height:17px;color:#fff;white-space:pre">Materialized value trained_model.</div><div class="a" style="left:820px;top:904px;width:1061px;height:31px;background:#1f2434;border:1px solid #2a2f40"><div class="a" style="left:101px;top:0;width:1px;height:29px;background:#2e3344"></div></div><div class="a mono" style="left:830.5px;top:911.5px;font-size:15px;line-height:17px;color:#9a9fac;white-space:pre">asset_key</div><div class="a mono" style="left:933px;top:911.5px;font-size:15px;line-height:17px;color:#fff;white-space:pre">trained_model <span style="margin-left:6px">[</span><span style="text-decoration:underline">View Asset</span>]</div><div class="a mono" style="left:310px;top:953.7px;font-size:15px;line-height:17px;color:#b6bac4;white-space:nowrap">2:23:36.140 am</div><div class="a mono" style="left:457px;top:956.3px;font-size:14.8px;line-height:17px;font-weight:bold;color:#fff;white-space:nowrap">trained_model</div><div class="a" style="left:635.5px;top:954.3px;width:144px;height:30px;border-radius:8px;background:#0b2724"></div><div class="a mono" style="left:644.5px;top:961.5px;font-size:15px;line-height:17px;color:#8ee6b8;white-space:nowrap">STEP_SUCCESS</div><svg class="a" style="left:1870px;top:193px" width="19" height="280" viewBox="1870 193 19 280" fill="#d2d5dd">
<path d="M1883.5 210.5H1894L1888.7 216.2Z"/><path d="M1883.5 290.5H1894L1888.7 296.2Z"/><path d="M1883.5 370.5H1894L1888.7 376.2Z"/><path d="M1886 447V459L1893 453Z"/>
</svg>
</body></html>
